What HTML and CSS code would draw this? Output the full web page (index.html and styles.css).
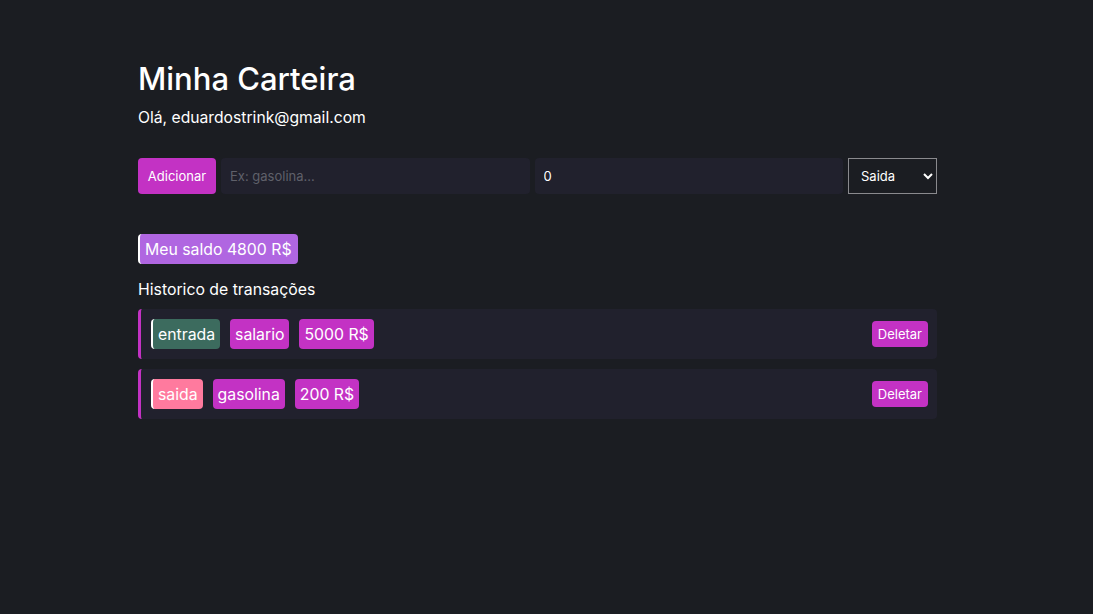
FILE: index.html
```html
<!DOCTYPE html>
<html lang="pt-BR">
<head>
<meta charset="utf-8">
<title>Minha Carteira</title>
<link rel="stylesheet" href="styles.css">
</head>
<body>
<main class="wrap">
  <h1 class="title">Minha Carteira</h1>
  <p class="hello">Olá, eduardostrink@gmail.com</p>
  <form class="form">
    <button type="button" class="btn-add">Adicionar</button>
    <input class="field" type="text" placeholder="Ex: gasolina...">
    <input class="field" type="text" value="0">
    <select class="select"><option>Saida</option><option>Entrada</option></select>
  </form>
  <div class="saldo">Meu saldo 4800 R$</div>
  <h2 class="hist">Historico de transações</h2>
  <ul class="list">
    <li class="row">
      <span class="tag tag-in">entrada</span>
      <span class="tag">salario</span>
      <span class="tag">5000 R$</span>
      <button type="button" class="btn-del">Deletar</button>
    </li>
    <li class="row">
      <span class="tag tag-out">saida</span>
      <span class="tag">gasolina</span>
      <span class="tag">200 R$</span>
      <button type="button" class="btn-del">Deletar</button>
    </li>
  </ul>
</main>
</body>
</html>
```
FILE: styles.css
```css
* { box-sizing: border-box; }
html, body { margin: 0; padding: 0; }
body {
  background: #1b1d22;
  color: #fff;
  font-family: Inter, "Noto Sans", sans-serif;
}
.wrap {
  width: 799px;
  margin: 0 0 0 138px;
  padding-top: 60px;
}
.title {
  margin: 0;
  font-size: 31px;
  font-weight: 500;
  line-height: 38px;
}
.hello {
  margin: 10px 0 0;
  font-size: 15.7px;
  line-height: 20px;
}
.form {
  display: flex;
  gap: 5px;
  margin-top: 30px;
  height: 36px;
}
.btn-add {
  width: 78px;
  border: none;
  border-radius: 4px;
  background: #c332c4;
  color: #fff;
  font-family: inherit;
  font-size: 13px;
  padding: 0;
}
.field {
  flex: 1;
  border: none;
  border-radius: 4px;
  background: #21212d;
  color: #fff;
  font-family: inherit;
  font-size: 13px;
  padding: 0 9px;
  outline: none;
}
.field::placeholder { color: #5f606a; }
.select {
  width: 89px;
  background: #1b1d22;
  color: #fff;
  border: 1px solid #8a8a8e;
  border-radius: 0;
  font-family: inherit;
  font-size: 13px;
  padding: 0 8px;
}
.saldo {
  display: inline-block;
  margin-top: 40px;
  height: 30px;
  line-height: 31px;
  padding: 0 6px 0 5px;
  background: #b066e1;
  border-left: 2px solid #fff;
  border-radius: 4px;
  font-size: 15.8px;
}
.hist {
  margin: 14px 0 0;
  font-size: 15.8px;
  font-weight: 400;
  line-height: 23px;
}
.list {
  list-style: none;
  margin: 8px 0 0;
  padding: 0;
  display: flex;
  flex-direction: column;
  gap: 10px;
}
.row {
  display: flex;
  align-items: center;
  gap: 10px;
  height: 50px;
  padding: 0 9px 0 10px;
  background: #21212d;
  border-left: 3px solid #c332c4;
  border-radius: 4px;
}
.tag {
  height: 30px;
  line-height: 31px;
  padding: 0 5px;
  border-radius: 4px;
  background: #c332c4;
  font-size: 15.8px;
}
.tag-in { background: #3c6b5e; border-left: 2px solid #fff; }
.tag-out { background: #ff7a9e; border-left: 2px solid #fff; }
.btn-del {
  margin-left: auto;
  height: 26px;
  padding: 0 6px;
  border: none;
  border-radius: 4px;
  background: #c332c4;
  color: #fff;
  font-family: inherit;
  font-size: 13px;
}
```
